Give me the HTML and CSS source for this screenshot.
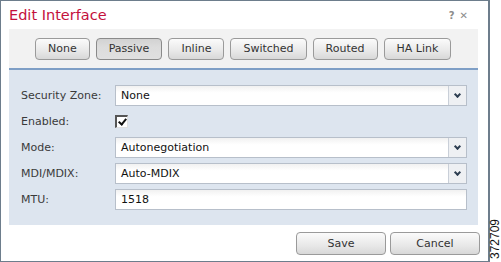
FILE: index.html
```html
<!DOCTYPE html>
<html lang="en">
<head>
  <meta charset="UTF-8">
  <title>Edit Interface</title>
  <link rel="stylesheet" href="styles.css">
</head>
<body>
  <div class="page">
    <div class="dialog">
      <div class="header">
        <h2>Edit Interface</h2>
        <div class="tools"><span>?</span><span class="close">&#x2715;</span></div>
      </div>

      <div class="toolbar">
        <button class="mode-btn">None</button>
        <button class="mode-btn">Passive</button>
        <button class="mode-btn">Inline</button>
        <button class="mode-btn">Switched</button>
        <button class="mode-btn">Routed</button>
        <button class="mode-btn">HA Link</button>
      </div>

      <div class="form">
        <label>Security Zone:</label>
        <div class="select"><span>None</span><i class="arrow"></i></div>

        <label>Enabled:</label>
        <div class="check-wrap"><span class="checkbox"></span></div>

        <label>Mode:</label>
        <div class="select"><span>Autonegotiation</span><i class="arrow"></i></div>

        <label>MDI/MDIX:</label>
        <div class="select"><span>Auto-MDIX</span><i class="arrow"></i></div>

        <label>MTU:</label>
        <div class="select"><span>1518</span></div>
      </div>

      <div class="footer">
        <button class="foot-btn">Save</button>
        <button class="foot-btn">Cancel</button>
      </div>
    </div>
    <div class="fig-num"><span>372709</span></div>
  </div>
</body>
</html>
```

FILE: styles.css
```css
body {
  margin: 0;
  background: white;
  font-family: 'DejaVu Sans', sans-serif;
  font-size: 11px;
  color: #222;
}
.page {
  display: flex;
  width: 501px;
  height: 262px;
}
.dialog {
  flex-shrink: 0;
  width: 490px;
  height: 262px;
  box-sizing: border-box;
  border: 1px solid #6d7d8c;
  border-right-width: 2px;
  display: flex;
  flex-direction: column;
}
.header {
  height: 28px;
  display: flex;
  justify-content: space-between;
  align-items: center;
  padding: 0 20px 0 8px;
}
h2 {
  margin: 0;
  font-weight: normal;
  font-size: 14.5px;
  color: #c4103c;
}
.tools {
  display: flex;
  gap: 5px;
  color: #8c8c8c;
  font-weight: bold;
  font-size: 10px;
}
.tools .close {
  font-weight: normal;
  font-size: 10px;
}
.toolbar {
  margin: 0 10px 0 8px;
  height: 39px;
  background: #f2f2f2;
  border-bottom: 2px solid #7f9fc6;
  display: flex;
  align-items: center;
  gap: 6px;
  padding-left: 26px;
}
.mode-btn,
.foot-btn {
  font-family: inherit;
  font-size: 11px;
  color: #333;
  height: 22px;
  padding: 0 12px;
  border: 1px solid #9a9a9a;
  border-radius: 4px;
  background: linear-gradient(#fbfbfb, #e8e8e8 60%, #d8d8d8);
}
.mode-btn:nth-child(2) {
  background: linear-gradient(#d2d2d2, #dcdcdc 40%, #e0e0e0);
  border-color: #8a8a8a;
}
.form {
  margin: 0 10px 0 8px;
  background: #dde5ef;
  padding: 15px 11px 15px 12px;
  display: grid;
  grid-template-columns: 94px 1fr;
  grid-auto-rows: 21px;
  row-gap: 5px;
  align-items: center;
}
.form label {
  color: #3a3a3a;
}
.select {
  height: 21px;
  box-sizing: border-box;
  border: 1px solid #b7bfca;
  background: linear-gradient(#f1f1f1, #ffffff 35%);
  display: flex;
  align-items: center;
  padding-left: 5px;
  font-size: 11px;
  color: #111;
}
.select span {
  flex: 1;
}
.arrow {
  width: 17px;
  height: 19px;
  border-left: 1px solid #c9cfd8;
  background: #eef0f3;
  position: relative;
}
.arrow::after {
  content: "";
  position: absolute;
  left: 6px;
  top: 6px;
  width: 3px;
  height: 3px;
  border-right: 2px solid #2e3f52;
  border-bottom: 2px solid #2e3f52;
  transform: rotate(45deg);
}
.check-wrap {
  display: flex;
  align-items: center;
}
.checkbox {
  width: 13px;
  height: 13px;
  box-sizing: border-box;
  border: 1px solid #e0e0e0;
  border-top: 2px solid #555;
  border-left: 2px solid #555;
  background: white;
  position: relative;
}
.checkbox::after {
  content: "";
  position: absolute;
  left: 3px;
  top: 0px;
  width: 3px;
  height: 6px;
  border-right: 2px solid #111;
  border-bottom: 2px solid #111;
  transform: rotate(40deg);
}
.footer {
  display: flex;
  justify-content: flex-end;
  gap: 4px;
  padding: 7px 8px 0 0;
}
.foot-btn {
  width: 90px;
  height: 23px;
}
.fig-num {
  flex: 1;
  display: flex;
  align-items: flex-end;
  justify-content: center;
  padding-bottom: 3px;
}
.fig-num span {
  writing-mode: vertical-rl;
  transform: rotate(180deg);
  font-family: 'Liberation Sans', sans-serif;
  font-size: 12px;
  line-height: 11px;
  color: #111;
}
```
